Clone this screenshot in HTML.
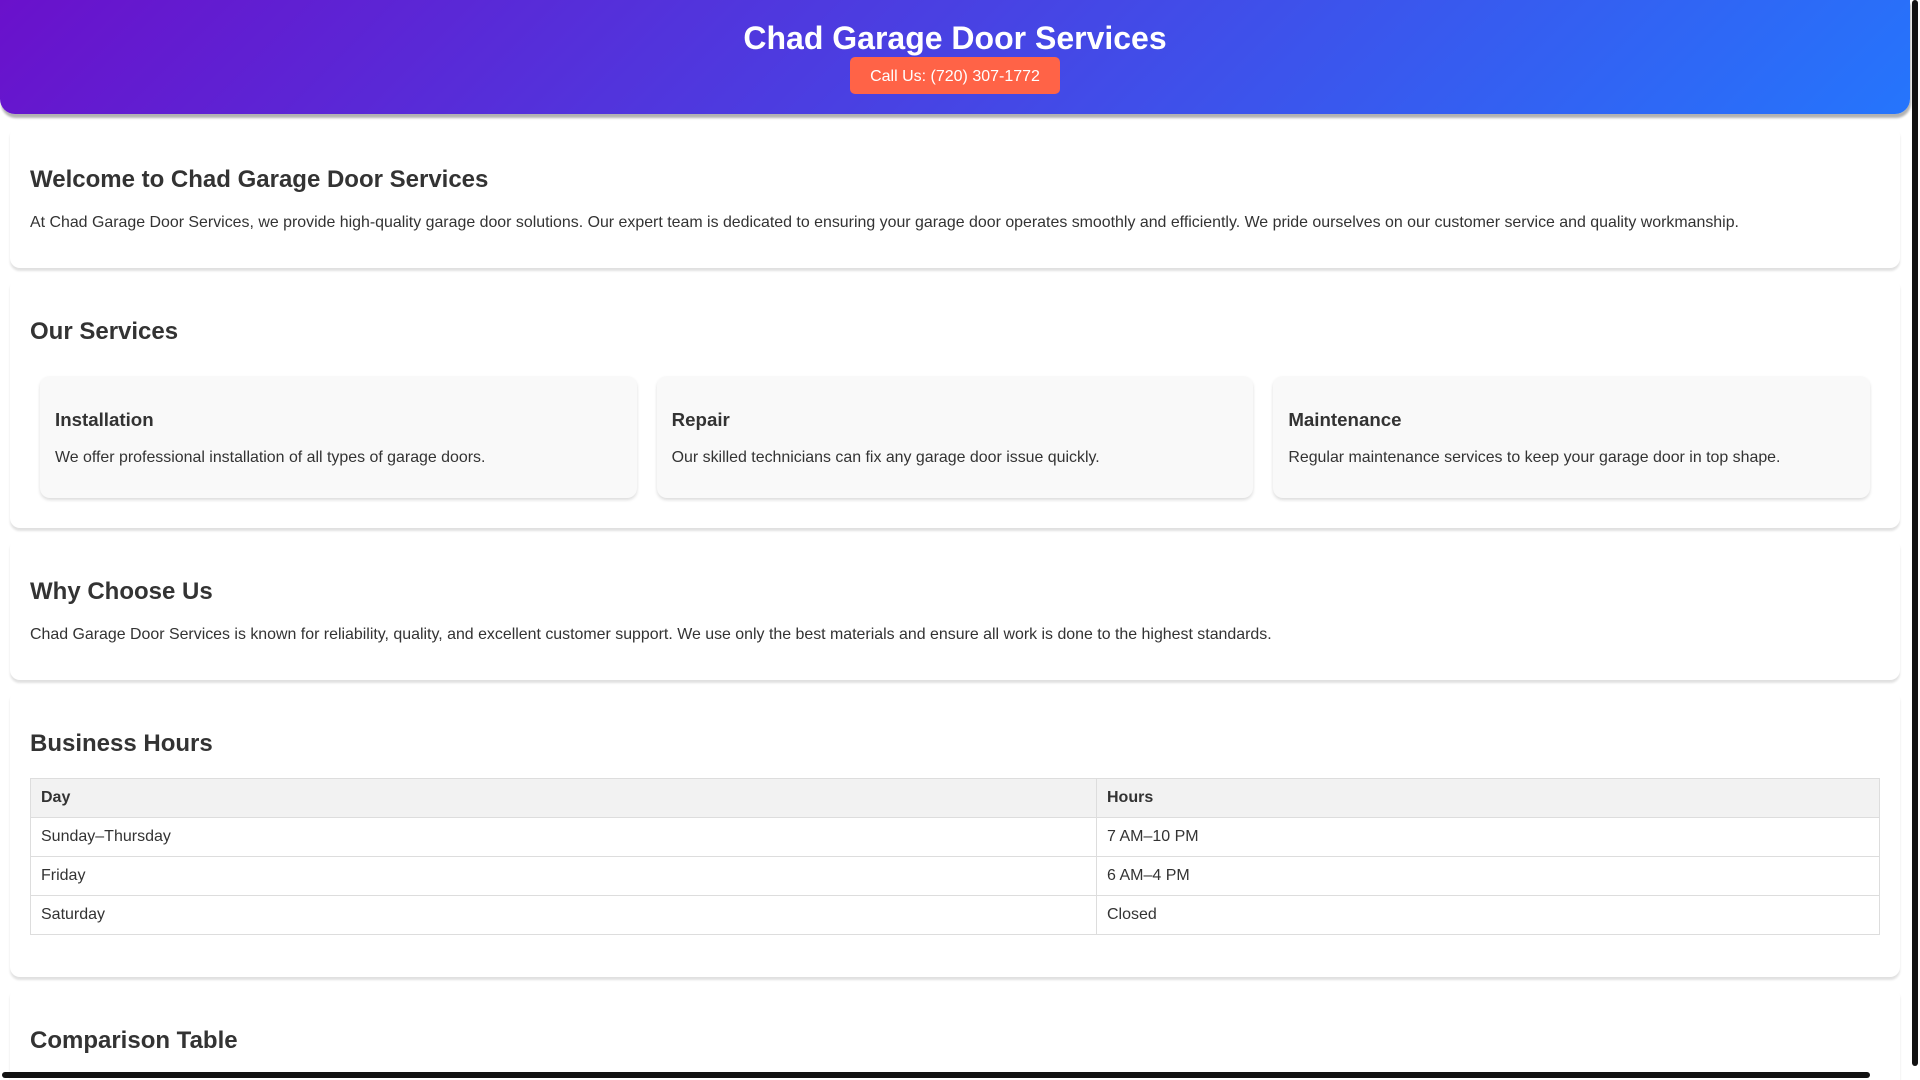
<!DOCTYPE html>
<html><head><meta charset="utf-8"><style>
html,body{margin:0;padding:0;width:1920px;height:1080px;overflow:hidden;background:#fff;font-family:"Liberation Sans",Arial,sans-serif;color:#333}
.wrap{width:1910px;position:relative}
header{background:linear-gradient(135deg,#6a11cb,#2575fc);color:#fff;text-align:center;padding:20px;height:74px;border-radius:0 0 15px 15px;box-shadow:1px 4px 2px rgba(0,0,0,.3)}
h1{margin:0;font-size:32px;line-height:37px}
.btn{display:inline-block;background:#ff6347;color:#fff;font-size:16px;padding:10px 20px 8px;border-radius:5px;line-height:19px}
main{padding:2px 10px 0}
section{background:#fff;margin:10px 0;padding:20px;border-radius:10px;box-shadow:0 3px 2px rgba(0,0,0,.12)}
h2{font-size:24px;margin:20px 0;line-height:28px}
p{font-size:15.93px;margin:16px 0;line-height:18px}
.cards{display:flex}
.card{flex:1;margin:10px;background:#f9f9f9;border-radius:10px;padding:15px;box-shadow:0 2px 3px rgba(0,0,0,.14)}
.card h3{font-size:18.7px;margin:18px 0;line-height:22px}
table{width:100%;border-collapse:collapse;font-size:16px}
td,th{border:1px solid #ddd;padding:10px;text-align:left;line-height:18px}
th{background:#f2f2f2}
.vs{position:absolute;left:1912px;top:0;width:6px;height:1066px;background:#111;border-radius:3px}
.hs{position:absolute;left:2px;top:1072px;width:1868px;height:6px;background:#111;border-radius:3px}
</style></head><body>
<div class="wrap">
<header><h1>Chad Garage Door Services</h1><span class="btn">Call Us: (720) 307-1772</span></header>
<main>
<section><h2>Welcome to Chad Garage Door Services</h2><p>At Chad Garage Door Services, we provide high-quality garage door solutions. Our expert team is dedicated to ensuring your garage door operates smoothly and efficiently. We pride ourselves on our customer service and quality workmanship.</p></section>
<section><h2>Our Services</h2><div class="cards">
<div class="card"><h3>Installation</h3><p>We offer professional installation of all types of garage doors.</p></div>
<div class="card"><h3>Repair</h3><p>Our skilled technicians can fix any garage door issue quickly.</p></div>
<div class="card"><h3>Maintenance</h3><p>Regular maintenance services to keep your garage door in top shape.</p></div>
</div></section>
<section><h2>Why Choose Us</h2><p>Chad Garage Door Services is known for reliability, quality, and excellent customer support. We use only the best materials and ensure all work is done to the highest standards.</p></section>
<section><h2>Business Hours</h2><table style="margin-bottom:22px"><tr><th style="width:1045px">Day</th><th>Hours</th></tr><tr><td>Sunday–Thursday</td><td>7 AM–10 PM</td></tr><tr><td>Friday</td><td>6 AM–4 PM</td></tr><tr><td>Saturday</td><td>Closed</td></tr></table></section>
<section><h2>Comparison Table</h2></section>
</main>
</div>
<div class="vs"></div><div class="hs"></div>
</body></html>
